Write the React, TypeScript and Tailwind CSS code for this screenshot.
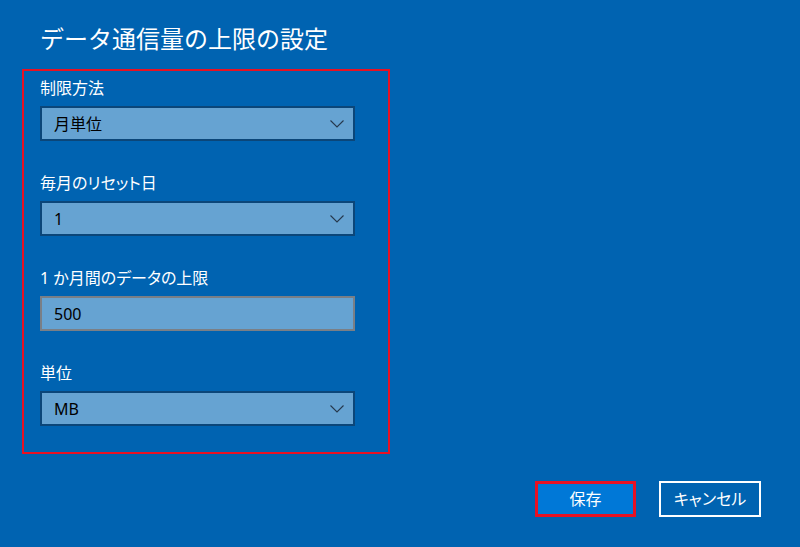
const FONT = "[font-family:'Noto_Sans','Noto_Sans_CJK_JP',sans-serif]";

function Chevron() {
  return (
    <svg width="14" height="8" viewBox="0 0 14 8" fill="none" className="shrink-0">
      <polyline points="0.5,0.5 7,7 13.5,0.5" stroke="#26384c" strokeWidth="1.1" />
    </svg>
  );
}

function Field({ label, value, kind }: { label: string; value: string; kind: "select" | "input" }) {
  return (
    <div className="flex flex-col">
      <div className="h-5 text-[16px] leading-5 text-white [font-feature-settings:'palt']">{label}</div>
      <div
        className={`mt-2 h-[35px] w-[315px] border-2 bg-[#66a3d2] flex items-center pl-3 pr-[9px] ${
          kind === "select" ? "border-[#0b4679]" : "border-[#7a7f86]"
        }`}
      >
        <span className="flex-1 text-[16px] text-black">{value}</span>
        {kind === "select" && <Chevron />}
      </div>
    </div>
  );
}

export default function App() {
  return (
    <div className={`w-[800px] h-[547px] bg-[#0063b1] flex flex-col overflow-hidden ${FONT}`}>
      <h1 className="ml-10 mt-[23px] text-[24px] leading-8 text-white">データ通信量の上限の設定</h1>

      <div className="ml-[22px] mt-[14px] w-[368px] h-[385px] border-2 border-[#e81123] pl-4 pt-[7px] flex flex-col gap-[32px]">
        <Field label="制限方法" value="月単位" kind="select" />
        <Field label="毎月のリセット日" value="1" kind="select" />
        <Field label="1 か月間のデータの上限" value="500" kind="input" />
        <Field label="単位" value="MB" kind="select" />
      </div>

      <div className="mt-[27px] mr-[39px] flex justify-end gap-[23px]">
        <button className="w-[101px] h-[36px] border-[3px] border-[#e81123] bg-[#0078d7] text-white text-[16px] [font-feature-settings:'palt']">
          保存
        </button>
        <button className="w-[102px] h-[36px] border-2 border-white bg-[#0063b1] text-white text-[16px] [font-feature-settings:'palt']">
          キャンセル
        </button>
      </div>
    </div>
  );
}
